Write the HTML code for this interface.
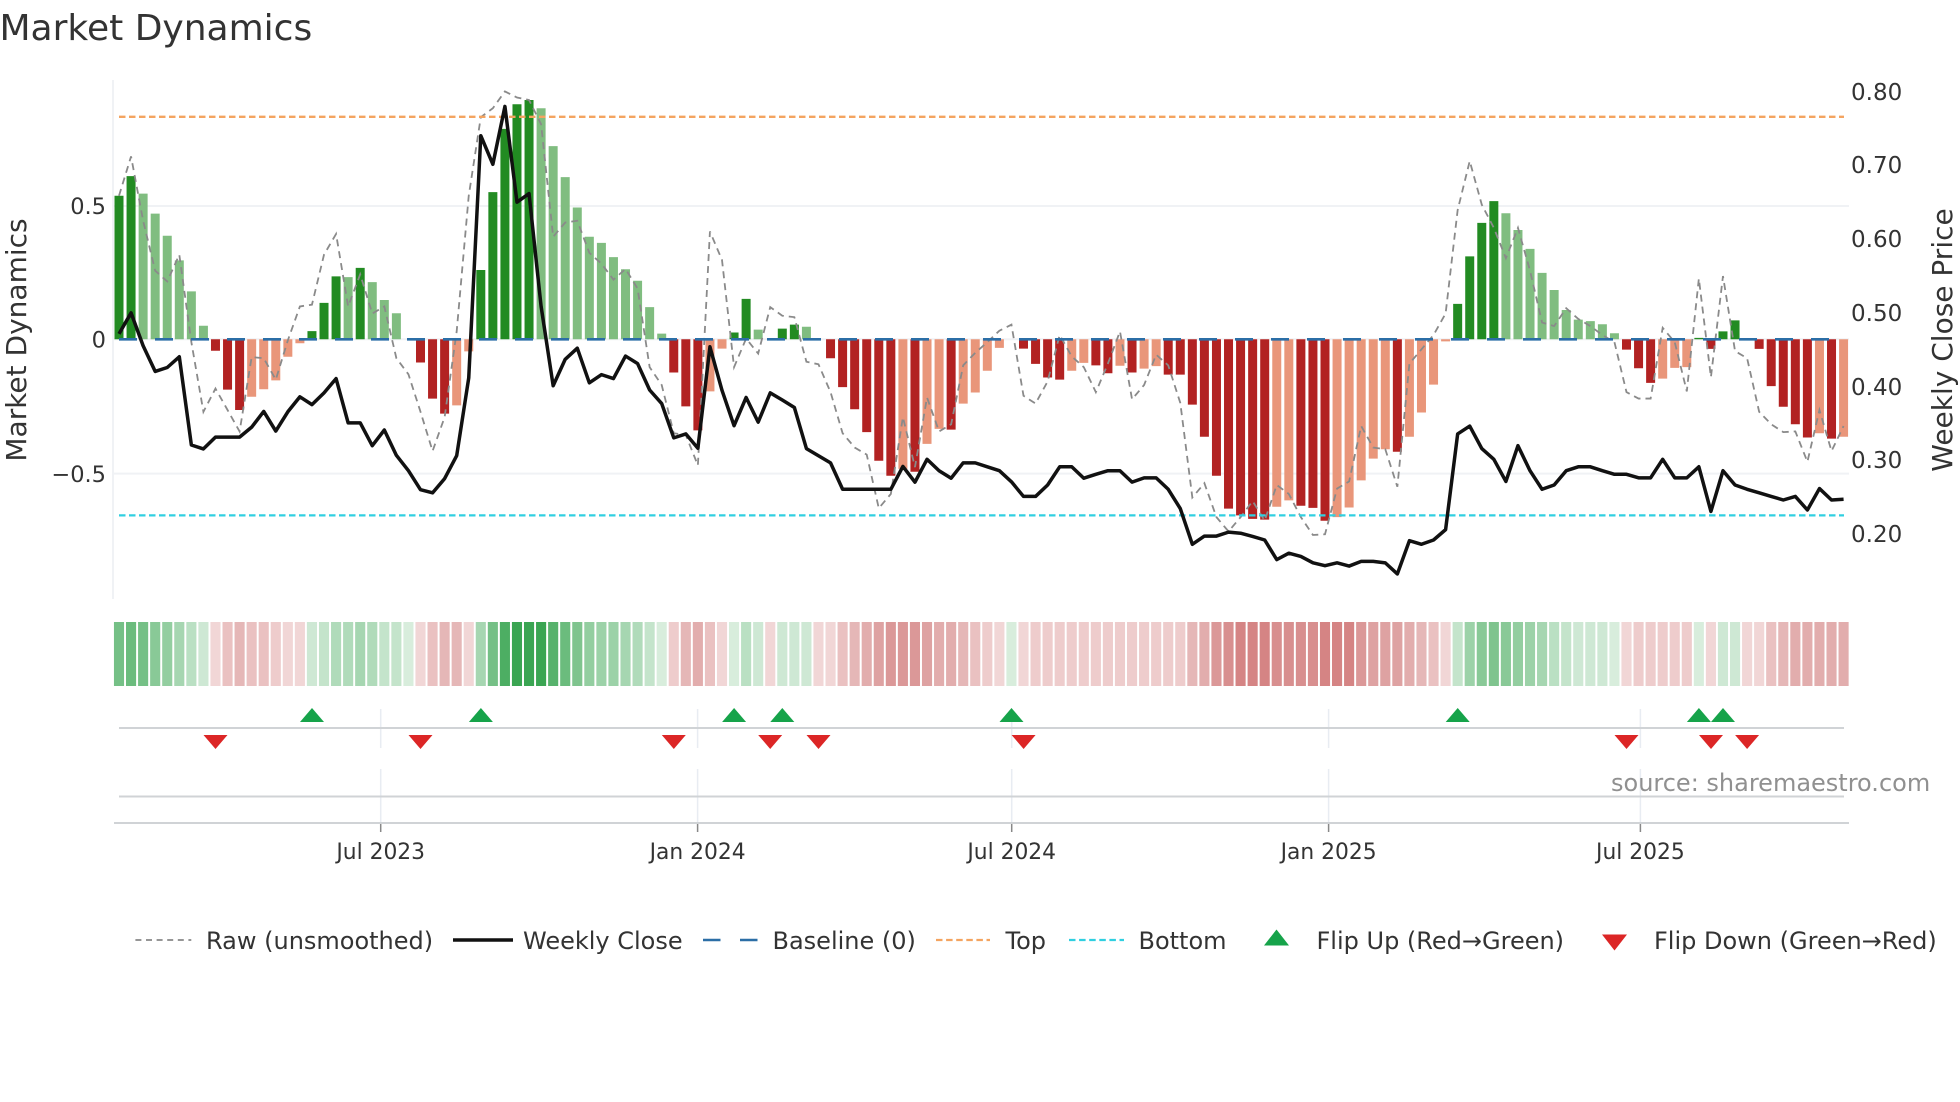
<!DOCTYPE html>
<html><head><meta charset="utf-8"><title>Market Dynamics</title>
<style>
html,body{margin:0;padding:0;background:#fff;width:1960px;height:1102px;overflow:hidden}
svg{display:block}
path,polyline{vector-effect:non-scaling-stroke;fill:none}
text{font-family:"DejaVu Sans","Liberation Sans",sans-serif;fill:#333}
</style></head><body>
<svg width="1960" height="1102" viewBox="0 0 1960 1102" xmlns="http://www.w3.org/2000/svg">
<text x="-0.5" y="40" font-size="36">Market Dynamics</text>

<!-- grid -->
<path stroke="#f0f2f5" stroke-width="2" d="M113 80V599M113 206H1849M113 339.3H1849M113 473.6H1849"/>

<!-- bars -->
<g transform="translate(119 60) scale(12.06 .35714)" stroke-width="9">
<path stroke="#228b22" d="M0 782V380M1 782V325M16 782V759M17 782V680M18 782V606M20 782V582M30 782V588M31 782V370M32 782V193M33 782V124M34 782V112M51 782V763M52 782V669M55 782V752M56 782V741M111 782V683M112 782V550M113 782V456M114 782V395M131 782V778M133 782V760M134 782V729"/>
<path stroke="#80bd80" d="M2 782V374M3 782V430M4 782V492M5 782V561M6 782V648M7 782V744M19 782V608M21 782V622M22 782V672M23 782V709M35 782V135M36 782V241M37 782V328M38 782V413M39 782V495M40 782V512M41 782V552M42 782V586M43 782V618M44 782V692M45 782V766M53 782V755M57 782V747M115 782V429M116 782V476M117 782V529M118 782V596M119 782V644M120 782V700M121 782V727M122 782V731M123 782V740M124 782V765"/>
<path stroke="#b22222" d="M8 782V814M9 782V923M10 782V980M25 782V847M26 782V948M27 782V990M46 782V875M47 782V970M48 782V1037M59 782V835M60 782V916M61 782V978M62 782V1042M63 782V1122M64 782V1164M66 782V1153M69 782V1035M75 782V808M76 782V851M77 782V889M78 782V895M81 782V855M82 782V877M84 782V875M87 782V881M88 782V881M89 782V965M90 782V1055M91 782V1164M92 782V1256M93 782V1275M94 782V1285M95 782V1287M98 782V1248M99 782V1254M100 782V1290M106 782V1097M125 782V811M126 782V863M127 782V904M132 782V809M136 782V809M137 782V913M138 782V971M139 782V1020M140 782V1057M142 782V1060"/>
<path stroke="#e9967a" d="M11 782V943M12 782V922M13 782V897M14 782V831M15 782V793M28 782V967M29 782V816M49 782V928M50 782V808M65 782V1145M67 782V1075M68 782V1033M70 782V962M71 782V931M72 782V870M73 782V806M79 782V870M80 782V848M83 782V856M85 782V864M86 782V857M96 782V1251M97 782V1233M101 782V1280M102 782V1253M103 782V1177M104 782V1116M105 782V1090M107 782V1055M108 782V987M109 782V909M110 782V788M128 782V892M129 782V862M130 782V860M141 782V1045M143 782V1055"/>
</g>

<!-- raw -->
<g transform="translate(119 60) scale(12.06 .35714)">
<polyline stroke="#8a8a8a" stroke-width="1.8" stroke-dasharray="7 5" points="0,380 1,270 2,450 3,590 4,620 5,545 6,790 7,985 8,920 9,980 10,1040 11,832 12,835 13,895 14,785 15,690 16,685 17,545 18,487 19,690 20,600 21,710 22,690 23,835 24,880 25,985 26,1095 27,1000 28,760 29,380 30,160 31,135 32,88 33,105 34,112 35,180 36,495 37,455 38,450 39,540 40,570 41,615 42,585 43,640 44,860 45,910 46,1045 47,1050 48,1135 49,480 50,560 51,860 52,780 53,822 54,692 55,716 56,720 57,845 58,852 59,930 60,1045 61,1085 62,1105 63,1255 64,1215 65,1000 66,1140 67,945 68,1040 69,1020 70,855 71,820 72,790 73,758 74,741 75,940 76,962 77,900 78,770 79,830 80,860 81,930 82,850 83,760 84,950 85,910 86,825 87,855 88,960 89,1225 90,1185 91,1280 92,1320 93,1280 94,1235 95,1290 96,1190 97,1215 98,1280 99,1330 100,1328 101,1200 102,1180 103,1025 104,1085 105,1090 106,1195 107,850 108,810 109,770 110,710 111,420 112,283 113,405 114,470 115,555 116,470 117,590 118,735 119,745 120,695 121,725 122,745 123,770 124,790 125,930 126,948 127,948 128,750 129,790 130,928 131,612 132,888 133,605 134,815 135,835 136,985 137,1020 138,1042 139,1040 140,1125 141,980 142,1095 143,1025"/>
</g>

<!-- reference lines -->
<path stroke="#2b6ea6" stroke-width="2.6" stroke-dasharray="18 18" d="M119 339.3H1844"/>
<path stroke="#f4a460" stroke-width="2.3" stroke-dasharray="6.5 3.5" d="M119 116.8H1844"/>
<path stroke="#30cfe0" stroke-width="2.3" stroke-dasharray="6.5 3.5" d="M119 515.4H1844"/>

<!-- close -->
<g transform="translate(119 60) scale(12.06 .35714)">
<polyline stroke="#111" stroke-width="3.5" stroke-linejoin="round" points="0,767 1,708 2,800 3,872 4,861 5,831 6,1078 7,1089 8,1056 9,1056 10,1056 11,1028 12,984 13,1039 14,985 15,943 16,965 17,932 18,892 19,1016 20,1016 21,1080 22,1036 23,1107 24,1150 25,1203 26,1212 27,1172 28,1108 29,890 30,212 31,292 32,130 33,398 34,374 35,690 36,912 37,838 38,807 39,904 40,881 41,892 42,829 43,850 44,924 45,962 46,1058 47,1047 48,1087 49,803 50,925 51,1024 52,945 53,1014 54,932 55,952 56,973 57,1088 58,1108 59,1128 60,1202 61,1202 62,1202 63,1202 64,1202 65,1138 66,1182 67,1118 68,1150 69,1171 70,1128 71,1128 72,1139 73,1150 74,1181 75,1222 76,1222 77,1190 78,1139 79,1139 80,1171 81,1160 82,1150 83,1150 84,1182 85,1170 86,1170 87,1202 88,1256 89,1356 90,1333 91,1333 92,1322 93,1325 94,1334 95,1344 96,1399 97,1381 98,1390 99,1408 100,1416 101,1408 102,1417 103,1404 104,1404 105,1408 106,1439 107,1346 108,1356 109,1344 110,1315 111,1047 112,1025 113,1088 114,1118 115,1180 116,1080 117,1150 118,1202 119,1190 120,1150 121,1139 122,1139 123,1150 124,1160 125,1160 126,1170 127,1170 128,1118 129,1170 130,1170 131,1139 132,1264 133,1150 134,1190 135,1202 136,1212 137,1222 138,1232 139,1222 140,1260 141,1200 142,1232 143,1230"/>
</g>

<!-- ticks -->
<g font-size="22.5" text-anchor="end">
<text x="106" y="214">0.5</text>
<text x="106" y="347.5">0</text>
<text x="106" y="482">−0.5</text>
</g>
<g font-size="23">
<text x="1851" y="100">0.80</text>
<text x="1851" y="173">0.70</text>
<text x="1851" y="247">0.60</text>
<text x="1851" y="321">0.50</text>
<text x="1851" y="395">0.40</text>
<text x="1851" y="468">0.30</text>
<text x="1851" y="542">0.20</text>
</g>
<text transform="translate(26 340) rotate(-90)" font-size="28" text-anchor="middle">Market Dynamics</text>
<text transform="translate(1952 340) rotate(-90)" font-size="28" text-anchor="middle">Weekly Close Price</text>

<!-- heat strip -->
<g transform="translate(119 622) scale(12.06 64)" stroke-width="10.1">
<g stroke="#3aa552">
<path stroke-opacity=".2" d="M24 0V1M45 0V1M51 0V1M74 0V1M124 0V1M131 0V1"/>
<path stroke-opacity=".25" d="M7 0V1M16 0V1M53 0V1M55 0V1M56 0V1M57 0V1M121 0V1M122 0V1M123 0V1M133 0V1M134 0V1"/>
<path stroke-opacity=".3" d="M17 0V1M22 0V1M23 0V1M44 0V1M120 0V1M111 0V1"/>
<path stroke-opacity=".35" d="M6 0V1M52 0V1M119 0V1"/>
<path stroke-opacity=".4" d="M18 0V1M19 0V1M21 0V1M43 0V1"/>
<path stroke-opacity=".45" d="M5 0V1M20 0V1M30 0V1M42 0V1M118 0V1"/>
<path stroke-opacity=".5" d="M40 0V1M41 0V1M112 0V1M117 0V1"/>
<path stroke-opacity=".55" d="M4 0V1M39 0V1M116 0V1"/>
<path stroke-opacity=".6" d="M3 0V1M115 0V1M113 0V1"/>
<path stroke-opacity=".65" d="M38 0V1M114 0V1"/>
<path stroke-opacity=".7" d="M0 0V1M2 0V1M31 0V1"/>
<path stroke-opacity=".75" d="M1 0V1M37 0V1"/>
<path stroke-opacity=".85" d="M36 0V1"/>
<path stroke-opacity=".9" d="M32 0V1"/>
<path stroke-opacity="1" d="M33 0V1M34 0V1M35 0V1"/>
</g>
<g stroke="#b22222" opacity=".93">
<path stroke-opacity=".2" d="M8 0V1M14 0V1M15 0V1M29 0V1M50 0V1M54 0V1M58 0V1M59 0V1M73 0V1M75 0V1M110 0V1M125 0V1M132 0V1M135 0V1M136 0V1M25 0V1"/>
<path stroke-opacity=".25" d="M13 0V1M46 0V1M72 0V1M76 0V1M77 0V1M78 0V1M79 0V1M80 0V1M81 0V1M82 0V1M83 0V1M84 0V1M85 0V1M86 0V1M87 0V1M88 0V1M126 0V1M127 0V1M128 0V1M129 0V1M130 0V1"/>
<path stroke-opacity=".3" d="M9 0V1M11 0V1M12 0V1M26 0V1M49 0V1M60 0V1M71 0V1M109 0V1M137 0V1"/>
<path stroke-opacity=".35" d="M10 0V1M27 0V1M28 0V1M47 0V1M61 0V1M70 0V1M89 0V1M108 0V1M138 0V1"/>
<path stroke-opacity=".4" d="M48 0V1M62 0V1M68 0V1M69 0V1M90 0V1M107 0V1M139 0V1M140 0V1M141 0V1M142 0V1M143 0V1"/>
<path stroke-opacity=".45" d="M63 0V1M67 0V1M104 0V1M105 0V1M106 0V1"/>
<path stroke-opacity=".5" d="M64 0V1M65 0V1M66 0V1M91 0V1M103 0V1"/>
<path stroke-opacity=".55" d="M92 0V1M96 0V1M97 0V1M98 0V1M99 0V1"/>
<path stroke-opacity=".6" d="M93 0V1M94 0V1M95 0V1M100 0V1M101 0V1M102 0V1"/>
</g>
</g>

<!-- lower panels -->
<path stroke="#e8ecf2" stroke-width="1.5" d="M380.7 709V748M697.6 709V748M1011.7 709V748M1328.6 709V748M1640.4 709V748M380.7 769V823M697.6 769V823M1011.7 769V823M1328.6 769V823M1640.4 769V823"/>
<path stroke="#d0d3d6" stroke-width="2" d="M119 728H1844M119 796.5H1844M114 823H1849"/>
<path stroke="#888" stroke-width="1.5" d="M380.7 824V832M697.6 824V832M1011.7 824V832M1328.6 824V832M1640.4 824V832"/>

<g fill="#16a34a">
<polygon points="312,708 324,722 300,722"/>
<polygon points="480.9,708 492.9,722 468.9,722"/>
<polygon points="734.1,708 746.1,722 722.1,722"/>
<polygon points="782.3,708 794.3,722 770.3,722"/>
<polygon points="1011.5,708 1023.5,722 999.5,722"/>
<polygon points="1457.7,708 1469.7,722 1445.7,722"/>
<polygon points="1698.9,708 1710.9,722 1686.9,722"/>
<polygon points="1723,708 1735,722 1711,722"/>
</g>
<g fill="#dc2626">
<polygon points="215.5,749 203.5,735 227.5,735"/>
<polygon points="420.5,749 408.5,735 432.5,735"/>
<polygon points="673.8,749 661.8,735 685.8,735"/>
<polygon points="770.2,749 758.2,735 782.2,735"/>
<polygon points="818.5,749 806.5,735 830.5,735"/>
<polygon points="1023.6,749 1011.6,735 1035.6,735"/>
<polygon points="1626.5,749 1614.5,735 1638.5,735"/>
<polygon points="1711,749 1699,735 1723,735"/>
<polygon points="1747.1,749 1735.1,735 1759.1,735"/>
</g>

<g font-size="21.8" text-anchor="middle">
<text x="380.7" y="859">Jul 2023</text>
<text x="697.6" y="859">Jan 2024</text>
<text x="1011.7" y="859">Jul 2024</text>
<text x="1328.6" y="859">Jan 2025</text>
<text x="1640.4" y="859">Jul 2025</text>
</g>

<text x="1611" y="791" font-size="24" style="fill:#909090">source: sharemaestro.com</text>

<!-- legend -->
<path stroke="#888" stroke-width="1.8" stroke-dasharray="6 4.6" d="M135.4 940H191.3"/>
<path stroke="#111" stroke-width="3.4" d="M453 940H513"/>
<path stroke="#2b6ea6" stroke-width="2.6" d="M703 940H720.5M740 940H757.5"/>
<path stroke="#f4a460" stroke-width="2.3" stroke-dasharray="6.5 3.6" d="M936 940H990"/>
<path stroke="#30cfe0" stroke-width="2.3" stroke-dasharray="6.5 3.6" d="M1069 940H1124"/>
<polygon fill="#16a34a" points="1276.5,929.5 1289,945.5 1264,945.5"/>
<polygon fill="#dc2626" points="1614.5,950.5 1602,934.5 1627,934.5"/>
<g font-size="24">
<text x="206" y="949">Raw (unsmoothed)</text>
<text x="523" y="949">Weekly Close</text>
<text x="772.5" y="949">Baseline (0)</text>
<text x="1005.5" y="949">Top</text>
<text x="1138.5" y="949">Bottom</text>
<text x="1316.5" y="949">Flip Up (Red→Green)</text>
<text x="1654" y="949">Flip Down (Green→Red)</text>
</g>
</svg>
</body></html>
